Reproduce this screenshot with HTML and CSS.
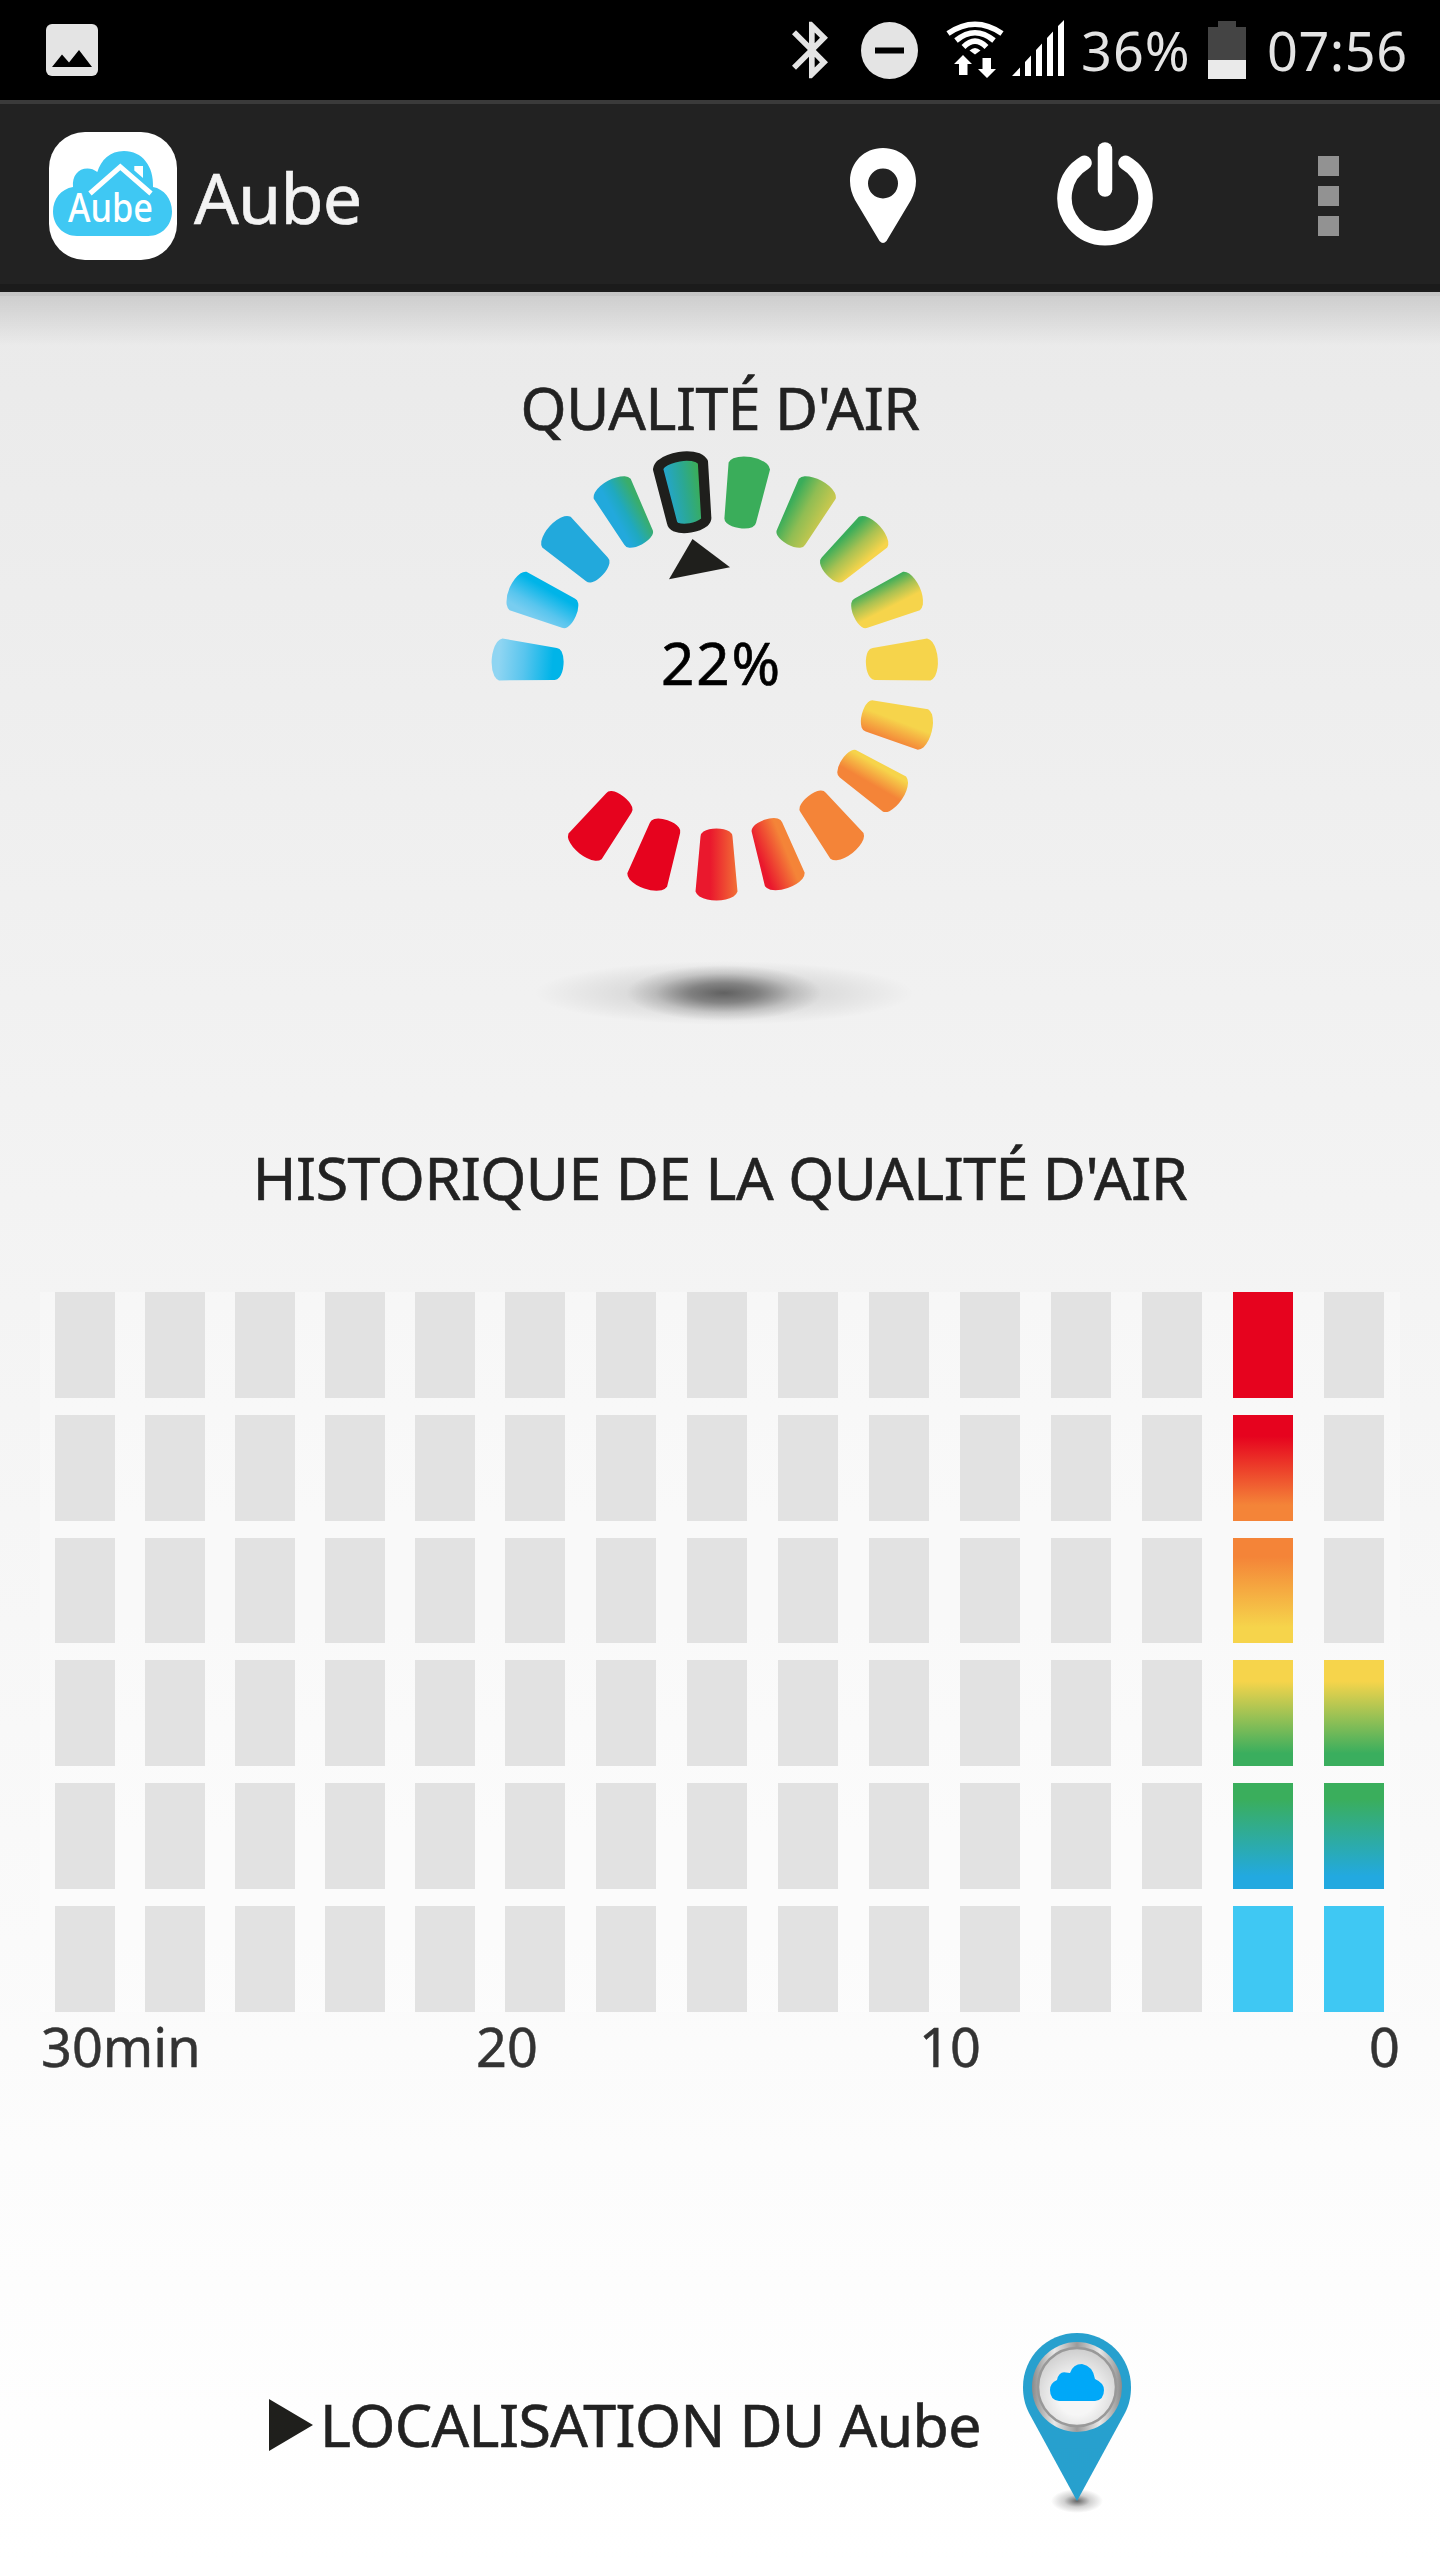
FILE: index.html
```html
<!DOCTYPE html>
<html lang="fr">
<head>
  <meta charset="UTF-8" />
  <meta name="viewport" content="width=device-width, initial-scale=1.0"/>
  <title>Aube</title>
  <link rel="stylesheet" href="styles.css">
</head>
<body>
  <div class="statusbar">
    <svg class="icon-image" width="52" height="52" viewBox="0 0 52 52">
      <rect width="52" height="52" rx="6" fill="#e4e4e4"/>
      <path d="M6 43L16 30.5L23 38.5L33 26L46 43Z" fill="#000"/>
    </svg>
    <div class="status-right">
      <svg class="icon-bt" width="36" height="58" viewBox="5 2 12.71 20">
        <path fill="#e4e4e4" d="M17.71 7.71L12 2h-1v7.59L6.41 5 5 6.41 10.59 12 5 17.59 6.41 19 11 14.41V22h1l5.71-5.71-4.3-4.29 4.3-4.29zM13 5.83l1.88 1.88L13 9.59V5.83zm1.88 10.46L13 18.17v-3.76l1.88 1.88z"/>
      </svg>
      <svg class="icon-dnd" width="57" height="57" viewBox="0 0 57 57">
        <circle cx="28.5" cy="28.5" r="28.5" fill="#e4e4e4"/>
        <rect x="14" y="25.5" width="29" height="6" fill="#000"/>
      </svg>
      <svg class="icon-wifi" width="58" height="58" viewBox="0 0 58 58">
        <g fill="none" stroke="#fff" stroke-width="5.5">
          <path d="M2 12.5Q29 -6 56 12.5"/>
          <path d="M10 19.5Q29 4 48 19.5"/>
          <path d="M17.5 26Q29 14.5 40.5 26"/>
        </g>
        <path fill="#fff" d="M23.5 29.5Q29 24.5 34.5 29.5L29 33.5Z"/>
        <path fill="#fff" d="M17 34L26 43H21.5V54H13V43H8ZM41 57L32 48H36.5V37H45V48H50Z"/>
      </svg>
      <svg class="icon-signal" width="52" height="56" viewBox="0 0 52 56">
        <path fill="#fff" d="M0 56L8 47.5V56ZM13 42L19 35.5V56H13ZM24 30L30 23.5V56H24ZM35 18L41 11.5V56H35ZM46 6L52 0V56H46Z"/>
      </svg>
      <span class="percent">36%</span>
      <svg class="icon-battery" width="38" height="58" viewBox="0 0 38 58">
        <path d="M10 0H28V6H38V58H0V6H10Z" fill="#444"/>
        <rect y="39" width="38" height="19" fill="#eaeaea"/>
      </svg>
      <span class="clock">07:56</span>
    </div>
  </div>

  <header class="actionbar">
    <svg class="logo" width="128" height="128" viewBox="49 132 128 128">
      <rect x="49" y="132" width="128" height="128" rx="36" fill="#fff"/>
      <path fill="#3fc8f3" d="M77 236C63 236 53 225 53 211.5C53 199 61 189 73 187C72 176 78 168.5 87.5 168.5C91 168.5 94 169.5 97.3 172C101 160 110 151 124 151C142 151 154 166 153 187C164 189 172 199 172 211.5C172 225 162 236 148.5 236Z"/>
      <path d="M90 193.5L120.3 166.8L151 193.5" fill="none" stroke="#fff" stroke-width="5"/>
      <path d="M134.3 166H143V178L134.3 170.5Z" fill="#fff"/>
      <text class="logo-text" x="68" y="222" textLength="85" lengthAdjust="spacingAndGlyphs">Aube</text>
    </svg>
    <h1>Aube</h1>
    <nav class="actions">
      <svg class="action-place" width="66" height="96" viewBox="0 0 66 96">
        <path fill="#fff" fill-rule="evenodd" d="M33 0C14 0 0 14.5 0 33C0 40 2 46 5 52L29.5 93Q33 97 36.5 93L61 52C64 46 66 40 66 33C66 14.5 52 0 33 0ZM33 20.5A15 15 0 1 1 33 50.5A15 15 0 1 1 33 20.5Z"/>
      </svg>
      <svg class="action-power" width="96" height="104" viewBox="0 0 96 104">
        <g fill="none" stroke="#fff" stroke-width="14.5" stroke-linecap="round">
          <path d="M27.5 20.8A40.5 40.5 0 1 0 68.5 20.8"/>
          <path d="M48 7.5V47.5"/>
        </g>
      </svg>
      <span class="more"><i></i><i></i><i></i></span>
    </nav>
  </header>

  <main>
    <section class="quality">
      <h2>QUALITÉ D'AIR</h2>
      <svg class="gauge" width="480" height="600" viewBox="475 440 480 600">
        <defs>
          <path id="seg" d="M-21 -214Q-20 -217 -17 -219Q-10 -223 0 -223Q10 -223 17 -219Q20 -217 21 -214L16 -159Q16 -156 13 -154Q8 -151 0 -151Q-8 -151 -13 -154Q-16 -156 -16 -159Z"/>
          <linearGradient id="g1" x1="0" y1="0" x2="0" y2="1"><stop offset=".1" stop-color="#8fd5f2"/><stop offset=".45" stop-color="#58c5ee"/><stop offset=".85" stop-color="#00b4e8"/></linearGradient>
          <linearGradient id="g2" x1="0" y1=".4" x2="1" y2=".6"><stop offset=".1" stop-color="#78cdf0"/><stop offset=".35" stop-color="#58c5ee"/><stop offset=".8" stop-color="#00b4e8"/></linearGradient>
          <linearGradient id="g3"><stop offset=".25" stop-color="#22a9dc"/><stop offset=".5" stop-color="#1fa9c0"/><stop offset=".9" stop-color="#3aad6a"/></linearGradient>
          <linearGradient id="g4"><stop offset="0" stop-color="#22a5dc"/><stop offset=".5" stop-color="#2ba893"/><stop offset=".85" stop-color="#3aad5a"/></linearGradient>
          <linearGradient id="g5"><stop offset=".1" stop-color="#3aad5a"/><stop offset=".5" stop-color="#90bd53"/><stop offset="1" stop-color="#cdc94e"/></linearGradient>
          <linearGradient id="g6"><stop offset=".1" stop-color="#3aad5a"/><stop offset=".5" stop-color="#a8c152"/><stop offset=".9" stop-color="#f6d44b"/></linearGradient>
          <linearGradient id="g7" x1="0" y1=".55" x2="1" y2=".45"><stop offset=".05" stop-color="#3aad5a"/><stop offset=".35" stop-color="#a8c152"/><stop offset=".65" stop-color="#f6d44b"/></linearGradient>
          <linearGradient id="g8" x1="0" y1=".4" x2="1" y2=".6"><stop offset=".45" stop-color="#f6d44b"/><stop offset=".95" stop-color="#f48438"/></linearGradient>
          <linearGradient id="g9" x1="0" y1=".55" x2="1" y2=".45"><stop offset=".15" stop-color="#f6d44b"/><stop offset=".6" stop-color="#f48438"/></linearGradient>
          <linearGradient id="g10" x1="0" y1=".55" x2="1" y2=".45"><stop offset=".25" stop-color="#f48438"/><stop offset=".9" stop-color="#ea182d"/></linearGradient>
          <linearGradient id="g11"><stop offset="0" stop-color="#f27036"/><stop offset=".65" stop-color="#ea182d"/></linearGradient>
          <radialGradient id="core"><stop offset="0" stop-color="#000" stop-opacity=".5"/><stop offset=".35" stop-color="#000" stop-opacity=".37"/><stop offset=".7" stop-color="#000" stop-opacity=".12"/><stop offset="1" stop-color="#000" stop-opacity="0"/></radialGradient>
          <radialGradient id="halo"><stop offset="0" stop-color="#000" stop-opacity=".2"/><stop offset=".5" stop-color="#000" stop-opacity=".09"/><stop offset="1" stop-color="#000" stop-opacity="0"/></radialGradient>
        </defs>
        <g transform="translate(714 677)">
          <use href="#seg" transform="rotate(-85.3)" fill="url(#g1)"/>
          <use href="#seg" transform="rotate(-66.3)" fill="url(#g2)"/>
          <use href="#seg" transform="rotate(-47.4)" fill="#22a9dc"/>
          <use href="#seg" transform="rotate(-28.4)" fill="url(#g3)"/>
          <use href="#seg" transform="rotate(-9) scale(1.08 1)" fill="url(#g4)" stroke="#1f1f1c" stroke-width="9.5" stroke-linejoin="round"/>
          <use href="#seg" transform="rotate(9.5)" fill="#3aad5a"/>
        </g>
        <g transform="translate(715.5 677)">
          <use href="#seg" transform="rotate(28.4)" fill="url(#g5)"/>
          <use href="#seg" transform="rotate(47.4)" fill="url(#g6)"/>
          <use href="#seg" transform="rotate(66.3)" fill="url(#g7)"/>
          <use href="#seg" transform="rotate(85.3)" fill="#f6d44b"/>
          <use href="#seg" transform="rotate(104.2)" fill="url(#g8)"/>
          <use href="#seg" transform="rotate(123.2)" fill="url(#g9)"/>
          <use href="#seg" transform="rotate(142.1)" fill="#f48438"/>
          <use href="#seg" transform="rotate(161.1)" fill="url(#g10)"/>
        </g>
        <g transform="translate(716.5 677.5)">
          <use href="#seg" transform="rotate(180)" fill="url(#g11)"/>
          <use href="#seg" transform="rotate(198.9)" fill="#e6031e"/>
          <use href="#seg" transform="rotate(217.9)" fill="#e6031e"/>
        </g>
        <path d="M692.5 539L730 567.3L669 579.3Z" fill="#1f1f1c"/>
        <text class="gauge-value" x="661" y="685" textLength="119">22%</text>
        <ellipse cx="724" cy="993" rx="190" ry="32" fill="url(#halo)"/>
        <ellipse cx="724" cy="993" rx="98" ry="28" fill="url(#core)"/>
      </svg>
    </section>

    <section class="history">
      <h2>HISTORIQUE DE LA QUALITÉ D'AIR</h2>
      <div class="chart" id="chart"></div>
      <div class="axis">
        <span>30min</span>
        <span>20</span>
        <span>10</span>
        <span>0</span>
      </div>
    </section>

    <section class="location">
      <svg class="arrow" width="44" height="52" viewBox="0 0 44 52">
        <path d="M0 0L44 26L0 52Z" fill="#1f1f1c"/>
      </svg>
      <span class="location-label">LOCALISATION DU Aube</span>
      <svg class="pin" width="110" height="184" viewBox="0 0 110 184">
        <defs>
          <linearGradient id="ring" x1="0" y1="0" x2="1" y2="0"><stop offset="0" stop-color="#8b8b8b"/><stop offset=".25" stop-color="#e8e8e8"/><stop offset=".5" stop-color="#9b9b9b"/><stop offset=".75" stop-color="#e8e8e8"/><stop offset="1" stop-color="#8b8b8b"/></linearGradient>
          <radialGradient id="face" cy=".62" r=".6"><stop offset=".4" stop-color="#f6f6f6"/><stop offset="1" stop-color="#cfcfcf"/></radialGradient>
          <radialGradient id="drop"><stop offset="0" stop-color="#000" stop-opacity=".6"/><stop offset=".5" stop-color="#000" stop-opacity=".18"/><stop offset="1" stop-color="#000" stop-opacity="0"/></radialGradient>
        </defs>
        <ellipse cx="55" cy="168" rx="26" ry="12" fill="url(#drop)"/>
        <path d="M55 0C25 0 1 24 1 54C1 64 3 72 7 80L55 168L103 80C107 72 109 64 109 54C109 24 85 0 55 0Z" fill="#27a0ce"/>
        <circle cx="55" cy="54" r="45" fill="url(#ring)"/>
        <circle cx="55" cy="54" r="39" fill="url(#face)" stroke="#999" stroke-width="2.5"/>
        <path d="M37 68Q28 67 28 57Q28 50 35 47Q37 38 44 39.5L48 40Q51 31 60 31Q71 33 73 46Q82 50 82 57Q82 67 73 68Z" fill="#00a8f8"/>
      </svg>
    </section>
  </main>

  <script>
    // number of lit cells per column, oldest first
    const levels = [0, 0, 0, 0, 0, 0, 0, 0, 0, 0, 0, 0, 0, 6, 3];
    const chart = document.getElementById('chart');

    levels.forEach(function(level) {
      const column = document.createElement('div');
      column.className = 'column';
      for (let row = 6; row >= 1; row--) {
        const cell = document.createElement('div');
        cell.className = row <= level ? 'cell level-' + row : 'cell';
        column.appendChild(cell);
      }
      chart.appendChild(column);
    });
  </script>
</body>
</html>
```
FILE: styles.css
```css
* {
  box-sizing: border-box;
}

body {
  margin: 0;
  width: 1440px;
  height: 2560px;
  font-family: "Noto Sans", "Open Sans", sans-serif;
  color: #222;
  overflow: hidden;
}

svg {
  display: block;
  flex-shrink: 0;
}

h1,
h2 {
  margin: 0;
  font-weight: 400;
}

.statusbar {
  height: 100px;
  padding: 0 29px 0 46px;
  display: flex;
  align-items: center;
  justify-content: space-between;
  background: #000;
  color: #e4e4e4;
}

.status-right {
  display: flex;
  align-items: center;
  font-size: 54px;
  line-height: 100px;
}

.icon-dnd {
  margin-left: 33px;
}

.icon-wifi {
  margin-left: 28px;
}

.icon-signal {
  margin: -4px 0 0 8px;
}

.percent {
  width: 113px;
  margin-left: 17px;
  letter-spacing: 1px;
}

.icon-battery {
  margin-left: 14px;
}

.clock {
  width: 144px;
  margin-left: 21px;
  letter-spacing: 0.5px;
  white-space: nowrap;
}

.actionbar {
  height: 192px;
  padding-left: 49px;
  display: flex;
  align-items: center;
  background: #222;
  border-top: 4px solid #3a3a3a;
  border-bottom: 8px solid #1b1b1b;
}

.logo {
  margin-top: 4px;
}

.logo-text {
  font-size: 40px;
  font-weight: 500;
  fill: #fff;
}

.actionbar h1 {
  margin: 6px 0 0 17px;
  font-size: 70px;
  line-height: 90px;
  letter-spacing: -0.8px;
  color: #f3f3f3;
  -webkit-text-stroke: 0.6px #f3f3f3;
}

.actions {
  margin: 0 101px 0 auto;
  display: flex;
  align-items: center;
}

.action-place {
  margin-top: 4px;
}

.action-power {
  margin-left: 141px;
}

.more {
  margin: 4px 0 0 165px;
  display: flex;
  flex-direction: column;
  gap: 10px;
}

.more i {
  width: 21px;
  height: 20px;
  background: #929292;
}

main {
  height: 2268px;
  padding-top: 75px;
  background:
    linear-gradient(rgba(0, 0, 0, 0.16) 4px, rgba(0, 0, 0, 0.12) 4px, rgba(0, 0, 0, 0)) 0 0 / 100% 54px no-repeat,
    linear-gradient(#eaeaea, #f3f3f3 40%, #fcfcfc 82%, #fff);
}

h2 {
  font-size: 59px;
  line-height: 80px;
  text-align: center;
  letter-spacing: -0.45px;
  -webkit-text-stroke: 0.6px #222;
}

.quality {
  height: 770px;
}

.gauge {
  margin: -7px 0 0 475px;
}

.gauge-value {
  font-size: 58.5px;
  fill: #000;
  stroke: #000;
  stroke-width: 0.6px;
}

.chart {
  width: 1360px;
  height: 720px;
  margin: 75px 40px 0;
  padding-left: 15px;
  display: flex;
  background: rgba(255, 255, 255, 0.3);
}

.column {
  width: 60px;
  margin-right: 31px;
  display: flex;
  flex-direction: column;
  flex-shrink: 0;
  gap: 17px;
}

.column:nth-child(-n+5) {
  margin-right: 30px;
}

.column:last-child {
  margin-right: 0;
}

.cell {
  flex: 1;
  background: #e2e2e2;
}

.level-1 {
  background: #3fc8f3;
}

.level-2 {
  background: linear-gradient(#3aae5c 15%, #22a9e0 88%);
}

.level-3 {
  background: linear-gradient(#f6d44b 20%, #3aae5e 88%);
}

.level-4 {
  background: linear-gradient(#f48438 18%, #f6d44b 85%);
}

.level-5 {
  background: linear-gradient(#e6031e 20%, #f48438 85%);
}

.level-6 {
  background: #e6031e;
}

.axis {
  margin: -3px 40px 0 41px;
  display: grid;
  grid-template-columns: 435px 443px 1fr auto;
  font-size: 54px;
  line-height: 74px;
  color: #333;
  -webkit-text-stroke: 0.5px #333;
}

.location {
  margin: 250px 0 0 269px;
  display: flex;
  align-items: flex-start;
}

.arrow {
  margin-top: 66px;
}

.location-label {
  width: 666px;
  margin: 51px 0 0 7px;
  font-size: 59px;
  line-height: 80px;
  letter-spacing: -0.55px;
  white-space: nowrap;
  -webkit-text-stroke: 0.6px #222;
}

.pin {
  margin-left: 36px;
}
```
